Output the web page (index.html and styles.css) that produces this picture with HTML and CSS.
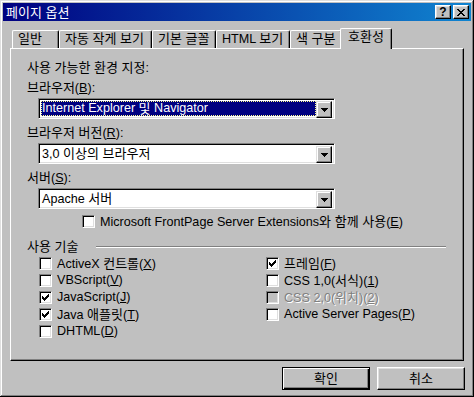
FILE: index.html
```html
<!DOCTYPE html>
<html lang="ko">
<head>
<meta charset="utf-8">
<title>페이지 옵션</title>
<link rel="stylesheet" href="styles.css">
</head>
<body>
<div class="window">
  <div class="titlebar">
    <span class="title k">페이지 옵션</span>
    <div class="tb-buttons">
      <span class="tbtn help">?</span>
      <span class="tbtn close"><svg width="8" height="7" viewBox="0 0 8 7" shape-rendering="crispEdges"><path d="M0 0h2v1H0zM6 0h2v1H6zM1 1h2v1H1zM5 1h2v1H5zM2 2h4v1H2zM3 3h2v1H3zM2 4h4v1H2zM1 5h2v1H1zM5 5h2v1H5zM0 6h2v1H0zM6 6h2v1H6z" fill="#000"/></svg></span>
    </div>
  </div>
  <div class="body">
    <div class="tabs">
      <div class="tab t1"><span class="k">일반</span></div>
      <div class="tab t2"><span class="k">자동 작게 보기</span></div>
      <div class="tab t3"><span class="k">기본 글꼴</span></div>
      <div class="tab t4">HTML <span class="k">보기</span></div>
      <div class="tab t5"><span class="k">색 구분</span></div>
      <div class="tab active"><span class="k">호환성</span></div>
    </div>
    <div class="panel">
      <div class="lbl"><span class="k">사용 가능한 환경 지정</span>:</div>
      <div class="lbl gap"><span class="k">브라우저</span>(<u>B</u>):</div>
      <div class="combo">
        <div class="field"><span class="sel">Internet Explorer <span class="k">및</span> Navigator</span></div>
        <span class="drop"><svg width="7" height="4" viewBox="0 0 7 4" shape-rendering="crispEdges"><path d="M0 0h7v1H0zM1 1h5v1H1zM2 2h3v1H2zM3 3h1v1H3z" fill="#000"/></svg></span>
      </div>
      <div class="lbl gap"><span class="k">브라우저 버전</span>(<u>R</u>):</div>
      <div class="combo">
        <div class="field"><span class="val">3,0 <span class="k">이상의 브라우저</span></span></div>
        <span class="drop"><svg width="7" height="4" viewBox="0 0 7 4" shape-rendering="crispEdges"><path d="M0 0h7v1H0zM1 1h5v1H1zM2 2h3v1H2zM3 3h1v1H3z" fill="#000"/></svg></span>
      </div>
      <div class="lbl gap"><span class="k">서버</span>(<u>S</u>):</div>
      <div class="combo">
        <div class="field"><span class="val">Apache <span class="k">서버</span></span></div>
        <span class="drop"><svg width="7" height="4" viewBox="0 0 7 4" shape-rendering="crispEdges"><path d="M0 0h7v1H0zM1 1h5v1H1zM2 2h3v1H2zM3 3h1v1H3z" fill="#000"/></svg></span>
      </div>
      <div class="cbrow fp"><span class="cb"></span><span>Microsoft FrontPage Server Extensions<span class="k">와 함께 사용</span>(<u>E</u>)</span></div>
      <div class="group"><span class="group-label k">사용 기술</span><span class="sep"></span></div>
      <div class="cols">
        <div class="col left">
          <div class="cbrow"><span class="cb"></span><span>ActiveX <span class="k">컨트롤</span>(<u>X</u>)</span></div>
          <div class="cbrow"><span class="cb"></span><span>VBScript(<u>V</u>)</span></div>
          <div class="cbrow"><span class="cb"><svg class="chk" width="11" height="11" viewBox="0 0 11 11" shape-rendering="crispEdges"><path d="M2 4h1v3H2zM3 5h1v3H3zM4 6h1v3H4zM5 5h1v3H5zM6 4h1v3H6zM7 3h1v3H7zM8 2h1v3H8z" fill="#000"/></svg></span><span>JavaScript(<u>J</u>)</span></div>
          <div class="cbrow"><span class="cb"><svg class="chk" width="11" height="11" viewBox="0 0 11 11" shape-rendering="crispEdges"><path d="M2 4h1v3H2zM3 5h1v3H3zM4 6h1v3H4zM5 5h1v3H5zM6 4h1v3H6zM7 3h1v3H7zM8 2h1v3H8z" fill="#000"/></svg></span><span>Java <span class="k">애플릿</span>(<u>T</u>)</span></div>
          <div class="cbrow"><span class="cb"></span><span>DHTML(<u>D</u>)</span></div>
        </div>
        <div class="col">
          <div class="cbrow"><span class="cb"><svg class="chk" width="11" height="11" viewBox="0 0 11 11" shape-rendering="crispEdges"><path d="M2 4h1v3H2zM3 5h1v3H3zM4 6h1v3H4zM5 5h1v3H5zM6 4h1v3H6zM7 3h1v3H7zM8 2h1v3H8z" fill="#000"/></svg></span><span><span class="k">프레임</span>(<u>F</u>)</span></div>
          <div class="cbrow"><span class="cb"></span><span>CSS 1,0(<span class="k">서식</span>)(<u>1</u>)</span></div>
          <div class="cbrow disabled"><span class="cb"></span><span>CSS 2,0(<span class="k">위치</span>)(<u>2</u>)</span></div>
          <div class="cbrow"><span class="cb"></span><span>Active Server Pages(<u>P</u>)</span></div>
        </div>
      </div>
    </div>
    <div class="buttons">
      <span class="btn default"><span class="k">확인</span></span>
      <span class="btn"><span class="k">취소</span></span>
    </div>
  </div>
</div>
</body>
</html>
```
FILE: styles.css
```css
html, body {
  margin: 0;
  padding: 0;
  background: #c0c0c0;
}
body {
  font: 12.6px/13px "Liberation Sans", "Noto Sans CJK KR", sans-serif;
  color: #000;
}
.k {
  font-size: 13px;
}
u {
  text-decoration: underline;
  text-underline-offset: 1px;
}
.window {
  width: 474px;
  height: 397px;
  box-sizing: border-box;
  padding: 3px;
  background: #c0c0c0;
  box-shadow: inset -1px -1px #000, inset 1px 1px #dfdfdf, inset -2px -2px #808080, inset 2px 2px #fff;
  display: flex;
  flex-direction: column;
}
.titlebar {
  height: 18px;
  flex: none;
  background: linear-gradient(to right, #000080, #1084d0);
  display: flex;
  align-items: center;
  justify-content: space-between;
  padding: 0 2px 0 3px;
  color: #fff;
}
.title {
  line-height: 13px;
  white-space: nowrap;
}
.tb-buttons {
  display: flex;
  gap: 2px;
}
.tbtn {
  width: 16px;
  height: 14px;
  box-sizing: border-box;
  background: #c0c0c0;
  border: 1px solid;
  border-color: #fff #000 #000 #fff;
  box-shadow: inset -1px -1px #808080, inset 1px 1px #dfdfdf;
  display: flex;
  align-items: center;
  justify-content: center;
  color: #000;
}
.help {
  font: bold 12px/11px "Liberation Sans", sans-serif;
  padding-top: 1px;
}
.close svg {
  display: block;
  margin-left: -1px;
}
.body {
  padding: 7px 7px 0;
  display: flex;
  flex-direction: column;
}
.tabs {
  display: flex;
  align-items: flex-end;
  height: 20px;
  padding-left: 2px;
}
.tab {
  box-sizing: border-box;
  height: 18px;
  border: 1px solid;
  border-bottom: 0;
  border-color: #fff #000 #000 #fff;
  box-shadow: inset -1px 0 #808080;
  border-radius: 2px 2px 0 0;
  padding: 1px 0 0 5px;
  white-space: nowrap;
  background: #c0c0c0;
  flex: none;
}
.t1 { width: 47px; }
.t2 { width: 93px; }
.t3 { width: 64px; }
.t4 { width: 74px; }
.t5 { width: 52px; }
.tab.active {
  width: 52px;
  height: 21px;
  margin: 0 0 -1px -2px;
  padding-left: 7px;
  position: relative;
  z-index: 1;
}
.panel {
  box-sizing: border-box;
  height: 313px;
  border: 1px solid;
  border-color: #fff #000 #000 #fff;
  box-shadow: inset -1px -1px #808080;
  padding: 12px 0 0 16px;
  display: flex;
  flex-direction: column;
  align-items: flex-start;
}
.lbl {
  height: 13px;
  white-space: nowrap;
}
.lbl.gap {
  margin-top: 7px;
}
.combo {
  margin: 4px 0 0 11px;
  width: 297px;
  height: 21px;
  box-sizing: border-box;
  border: 1px solid;
  border-color: #808080 #fff #fff #808080;
  box-shadow: inset 1px 1px #000, inset -1px -1px #dfdfdf;
  background: #fff;
  padding: 1px;
  display: flex;
}
.field {
  flex: 1;
  display: flex;
  align-items: center;
  padding: 1px 0 1px 1px;
}
.sel {
  flex: 1;
  align-self: stretch;
  display: flex;
  align-items: center;
  box-sizing: border-box;
  background: #000080;
  color: #fff;
  border: 1px dotted #ffff90;
  padding-left: 0;
  white-space: pre;
}
.val {
  padding-left: 1px;
  white-space: pre;
}
.drop {
  width: 16px;
  height: 17px;
  box-sizing: border-box;
  margin: 1px 1px 0 0;
  background: #c0c0c0;
  border: 1px solid;
  border-color: #dfdfdf #000 #000 #dfdfdf;
  box-shadow: inset -1px -1px #808080, inset 1px 1px #fff;
  display: flex;
  align-items: center;
  justify-content: center;
  flex: none;
}
.drop svg {
  display: block;
  margin: 1px 0 0 0;
}
.cbrow {
  display: flex;
  align-items: center;
  gap: 5px;
  height: 17px;
  white-space: nowrap;
}
.cbrow.fp {
  height: 15px;
  margin: 5px 0 0 55px;
}
.cb {
  width: 13px;
  height: 13px;
  box-sizing: border-box;
  border: 1px solid;
  border-color: #808080 #fff #fff #808080;
  box-shadow: inset 1px 1px #000, inset -1px -1px #dfdfdf;
  background: #fff;
  flex: none;
}
.chk {
  display: block;
}
.cbrow.disabled .cb {
  background: #c0c0c0;
}
.cbrow.disabled {
  color: #808080;
  text-shadow: 1px 1px 0 #fff;
}
.group {
  display: flex;
  align-items: center;
  height: 13px;
  margin-top: 11px;
}
.group-label {
  width: 69px;
  white-space: nowrap;
}
.sep {
  width: 350px;
  height: 0;
  border-top: 1px solid #808080;
  border-bottom: 1px solid #fff;
}
.cols {
  display: flex;
  margin: 2px 0 0 12px;
}
.col {
  display: flex;
  flex-direction: column;
}
.col.left {
  width: 227px;
}
.buttons {
  display: flex;
  justify-content: flex-end;
  gap: 7px;
  margin: 6px -1px 0 0;
}
.btn {
  width: 88px;
  height: 23px;
  box-sizing: border-box;
  background: #c0c0c0;
  border: 1px solid;
  border-color: #fff #000 #000 #fff;
  box-shadow: inset -1px -1px #808080, inset 1px 1px #dfdfdf;
  display: flex;
  align-items: center;
  justify-content: center;
}
.btn.default {
  border-color: #000;
  box-shadow: inset 1px 1px #fff, inset -1px -1px #000, inset -2px -2px #808080;
}
```
